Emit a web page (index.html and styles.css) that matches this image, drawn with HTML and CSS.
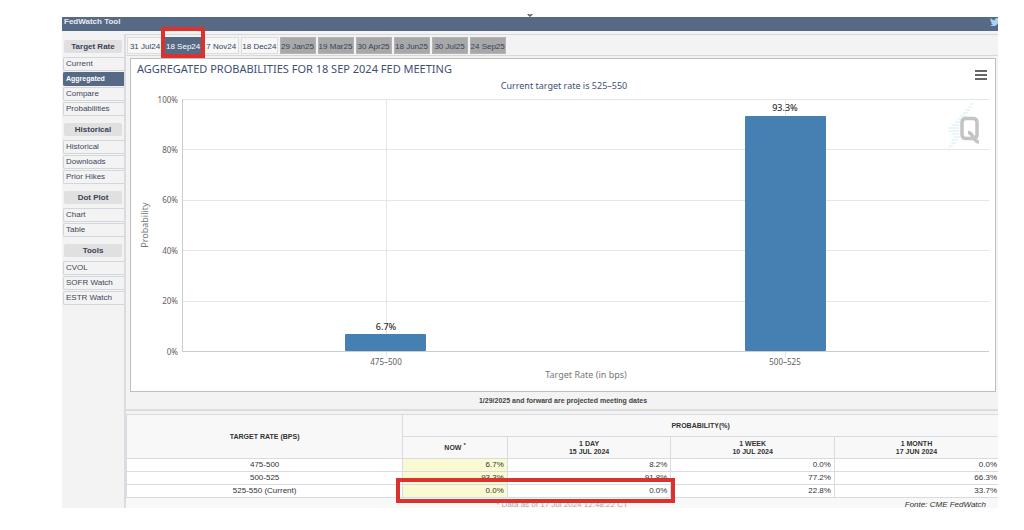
FILE: index.html
```html
<!DOCTYPE html>
<html lang="en">
<head>
<meta charset="utf-8">
<title>FedWatch Tool</title>
<link rel="stylesheet" href="styles.css">
</head>
<body>
<div class="page">
  <svg class="notch" viewBox="0 0 6 3" aria-hidden="true"><path d="M0 0L3 3L6 0H4L3 1L2 0Z" fill="#555"/></svg>
  <header class="topbar">
    <h1 class="topbar-title">FedWatch Tool</h1>
    <a class="share" href="#" aria-label="Share on Twitter"><svg class="bird" viewBox="0 0 24 24"><path fill="#a9d3f5" d="M23.9 4.6a10 10 0 0 1-2.8.8 5 5 0 0 0 2.1-2.7 10 10 0 0 1-3.1 1.2 4.9 4.9 0 0 0-8.4 4.5A14 14 0 0 1 1.7 3.2a4.9 4.9 0 0 0 1.5 6.5 5 5 0 0 1-2.2-.6 4.9 4.9 0 0 0 3.9 4.9 5 5 0 0 1-2.2.1 4.9 4.9 0 0 0 4.6 3.4A9.9 9.9 0 0 1 0 19.5a14 14 0 0 0 21.5-12.4 10 10 0 0 0 2.4-2.500z"/></svg></a>
  </header>
  <div class="layout">
    <nav class="sidebar">
      <section class="group">
        <h2 class="group-title">Target Rate</h2>
        <a class="item" href="#">Current</a>
        <a class="item item-active" href="#">Aggregated</a>
        <a class="item" href="#">Compare</a>
        <a class="item" href="#">Probabilities</a>
      </section>
      <section class="group">
        <h2 class="group-title">Historical</h2>
        <a class="item" href="#">Historical</a>
        <a class="item" href="#">Downloads</a>
        <a class="item" href="#">Prior Hikes</a>
      </section>
      <section class="group">
        <h2 class="group-title">Dot Plot</h2>
        <a class="item" href="#">Chart</a>
        <a class="item" href="#">Table</a>
      </section>
      <section class="group">
        <h2 class="group-title">Tools</h2>
        <a class="item" href="#">CVOL</a>
        <a class="item" href="#">SOFR Watch</a>
        <a class="item" href="#">ESTR Watch</a>
      </section>
    </nav>
    <main class="main">
      <div class="tabs">
        <button class="tab">31 Jul24</button>
        <button class="tab tab-active">18 Sep24<span class="mark tab-mark"></span></button>
        <button class="tab">7 Nov24</button>
        <button class="tab">18 Dec24</button>
        <button class="tab tab-projected">29 Jan25</button>
        <button class="tab tab-projected">19 Mar25</button>
        <button class="tab tab-projected">30 Apr25</button>
        <button class="tab tab-projected">18 Jun25</button>
        <button class="tab tab-projected">30 Jul25</button>
        <button class="tab tab-projected">24 Sep25</button>
      </div>
      <section class="panel">
        <div class="chart">
          <svg class="plot" viewBox="132 60 862 330" role="img" aria-label="Aggregated probabilities">
            <g class="grid">
              <path d="M183 99.500H989M183 149.500H989M183 200.500H989M183 250.500H989M183 301.500H989M386.500 99V357M785.500 99V357"/>
            </g>
            <path class="axis" d="M182.500 99V351.500H989"/>
            <rect class="bar" x="345" y="334" width="81" height="17" rx="1"/>
            <rect class="bar" x="745" y="116" width="81" height="235" rx="1"/>
            <text class="title" x="137" y="73">AGGREGATED PROBABILITIES FOR 18 SEP 2024 FED MEETING</text>
            <text class="subtitle" x="564" y="89">Current target rate is 525–550</text>
            <g class="ticks-y">
              <text x="178" y="103">100%</text>
              <text x="178" y="153">80%</text>
              <text x="178" y="203">60%</text>
              <text x="178" y="254">40%</text>
              <text x="178" y="304">20%</text>
              <text x="178" y="355">0%</text>
            </g>
            <g class="ticks-x">
              <text x="386" y="365">475–500</text>
              <text x="785" y="365">500–525</text>
            </g>
            <g class="values">
              <text x="386" y="330">6.7%</text>
              <text x="785" y="111">93.3%</text>
            </g>
            <text class="axis-title" x="586" y="378">Target Rate (in bps)</text>
            <text class="axis-title" transform="translate(148 225) rotate(-90)">Probability</text>
            <path fill="none" stroke="#d3effb" d="M970 104h3M968 107h4M965 110h5M963 113h5M960 116h7M958 119h6M955 122h5M952 125h7M948 128h11M948 131h11M952 134h7M954 137h6M952 140h6M951 143h5M949 146h4M948 149h2"/>
            <path fill="none" stroke="#c4c4c4" stroke-width="3.500" stroke-linejoin="round" d="M966 118.500h7q4 0 4 4v12q0 4-4 4h-7q-4 0-4-4v-12q0-4 4-4zM968 132.500c4 0 4 3 6 6s3 3.500 5 3.500"/>
          </svg>
          <button class="menu" aria-label="Chart menu"><svg class="menu-icon" viewBox="0 0 12 10"><path stroke="#666" stroke-width="2" d="M0 1h12M0 5h12M0 9h12"/></svg></button>
        </div>
        <p class="note">1/29/2025 and forward are projected meeting dates</p>
      </section>
      <div class="results">
        <table class="rates">
          <colgroup><col class="col-rate"><col class="col-now"><col class="col-past"><col class="col-past"><col class="col-past"></colgroup>
          <thead>
            <tr><th rowspan="2">TARGET RATE (BPS)</th><th colspan="4">PROBABILITY(%)</th></tr>
            <tr><th>NOW <sup>*</sup></th><th>1 DAY<br>15 JUL 2024</th><th>1 WEEK<br>10 JUL 2024</th><th>1 MONTH<br>17 JUN 2024</th></tr>
          </thead>
          <tbody>
            <tr><td class="rate">475-500</td><td class="now">6.7%</td><td>8.2%</td><td>0.0%</td><td>0.0%</td></tr>
            <tr><td class="rate">500-525</td><td class="now">93.3%</td><td>91.8%</td><td>77.2%</td><td>66.3%</td></tr>
            <tr><td class="rate">525-550 (Current)</td><td class="now">0.0%</td><td>0.0%</td><td>22.8%</td><td>33.7%</td></tr>
          </tbody>
        </table>
        <footer class="foot">
          <span></span>
          <span class="stamp">* Data as of 17 Jul 2024 12:48:22 CT</span>
          <em class="source">Fonte: CME FedWatch</em>
        </footer>
        <span class="mark row-mark"></span>
      </div>
    </main>
  </div>
</div>
</body>
</html>
```

FILE: styles.css
```css
* { box-sizing: border-box; }

body {
  margin: 0;
  background: #fff;
  font-family: "Liberation Sans", Arial, sans-serif;
  font-size: 8px;
  line-height: 12px;
  color: #333;
}

.page { margin: 0 26px 0 62px; padding-top: 14px; }

.notch { display: block; width: 6px; height: 3px; margin: 0 auto; }

.topbar {
  display: flex;
  justify-content: space-between;
  height: 14px;
  padding-left: 2px;
  overflow: hidden;
  background: #566a86;
}

.topbar-title { margin: 0; font-size: 8px; line-height: 9px; color: #e6ebf2; }

.share { flex: none; width: 8px; height: 12px; overflow: hidden; }
.bird { display: block; width: 10px; height: 10px; }

.layout {
  display: grid;
  grid-template-columns: 64px minmax(0, 1fr);
  background: #f3f3f3;
}

.sidebar { margin-top: 3px; padding: 6px 0 0 1px; border-right: 2px solid #dcdce0; }

.group { margin-bottom: 7px; }

.group-title {
  margin: 0 2px 4px 1px;
  border-radius: 2px;
  background: #e0e0e0;
  font-size: 8px;
  line-height: 13px;
  text-align: center;
  color: #3a4256;
}

.item {
  display: block;
  height: 14px;
  margin-bottom: 1px;
  padding-left: 2px;
  border: 1px solid #d4d6de;
  border-right: 0;
  border-radius: 2px 0 0 2px;
  line-height: 12px;
  white-space: nowrap;
  color: #3c465c;
  text-decoration: none;
}

.item-active { background: #566a86; border-color: #566a86; color: #fff; font-size: 7px; font-weight: bold; }

.main { padding-top: 3px; }

.tabs {
  display: flex;
  gap: 2px;
  height: 22px;
  padding: 2px 1px 1px;
  border-top: 1px solid #d8d8d8;
  border-bottom: 1px solid #d8d8d8;
}

.tab {
  position: relative;
  min-width: 36px;
  padding: 1px 0 0;
  border: 1px solid #ddd;
  background: #f7f7f7;
  font: 8px/15px "Liberation Sans", Arial, sans-serif;
  white-space: nowrap;
  color: #35445c;
}

.tab-active { background: #566a86; border-color: #566a86; color: #fff; }
.tab-projected { background: #a8a8a8; border-color: #b4b4b4; }

.mark { position: absolute; border: 4px solid #dc322d; pointer-events: none; }
.tab-mark { inset: -11px -5px -5px; z-index: 1; }
.row-mark { left: 31%; width: 32%; bottom: 5px; height: 25px; }

.panel { padding: 2px 2px 0 4px; border-bottom: 2px solid #dcdcdc; }

.chart { position: relative; padding: 1px; border: 1px solid #bfbfbf; background: #fff; }

.plot { display: block; width: 100%; font-family: "Noto Sans", "Open Sans", sans-serif; }

.grid { stroke: #e6e6e6; fill: none; }
.axis { stroke: #ccc; fill: none; }
.bar { fill: #4680b3; }
.title { font-size: 11px; fill: #3e4f72; }
.subtitle { font-size: 9px; fill: #3e4f72; text-anchor: middle; }
.ticks-y { font-size: 8px; fill: #606060; text-anchor: end; }
.ticks-x { font-size: 8px; fill: #606060; text-anchor: middle; }
.values { font-size: 9px; font-weight: 500; fill: #333; text-anchor: middle; }
.axis-title { font-size: 9px; fill: #777; text-anchor: middle; }

.menu {
  position: absolute;
  top: 11px;
  right: 8px;
  padding: 0;
  border: 0;
  background: none;
}

.menu-icon { display: block; width: 12px; height: 10px; }

.note { margin: 0; font-size: 7px; line-height: 17px; font-weight: bold; text-align: center; color: #444; }

.results { position: relative; margin-top: 3px; background: #f8f8f8; }

.rates { width: 100%; table-layout: fixed; border-collapse: collapse; }

.col-rate { width: 277px; width: 31.7%; }
.col-now { width: 12%; }

.rates th {
  height: 22px;
  padding: 0;
  border: 1px solid #d9dae2;
  font-size: 7px;
  line-height: 8px;
  color: #333;
}

.rates th:last-child { border-right: 0; }

.rates sup { font-size: 6px; line-height: 0; }

.rates td {
  height: 13px;
  padding: 0 3px;
  border: 1px solid #d9dae2;
  background: #fff;
  line-height: 12px;
  text-align: right;
}

.rates td:last-child { padding-right: 1px; border-right: 0; }

.rates .rate { text-align: center; }
.rates .now { background: #fafad2; }

.foot {
  display: grid;
  grid-template-columns: 1fr auto 1fr;
  height: 10px;
  overflow: hidden;
  line-height: 13px;
}

.stamp { color: #aaa; }
.source { padding-right: 12px; text-align: right; }
```
